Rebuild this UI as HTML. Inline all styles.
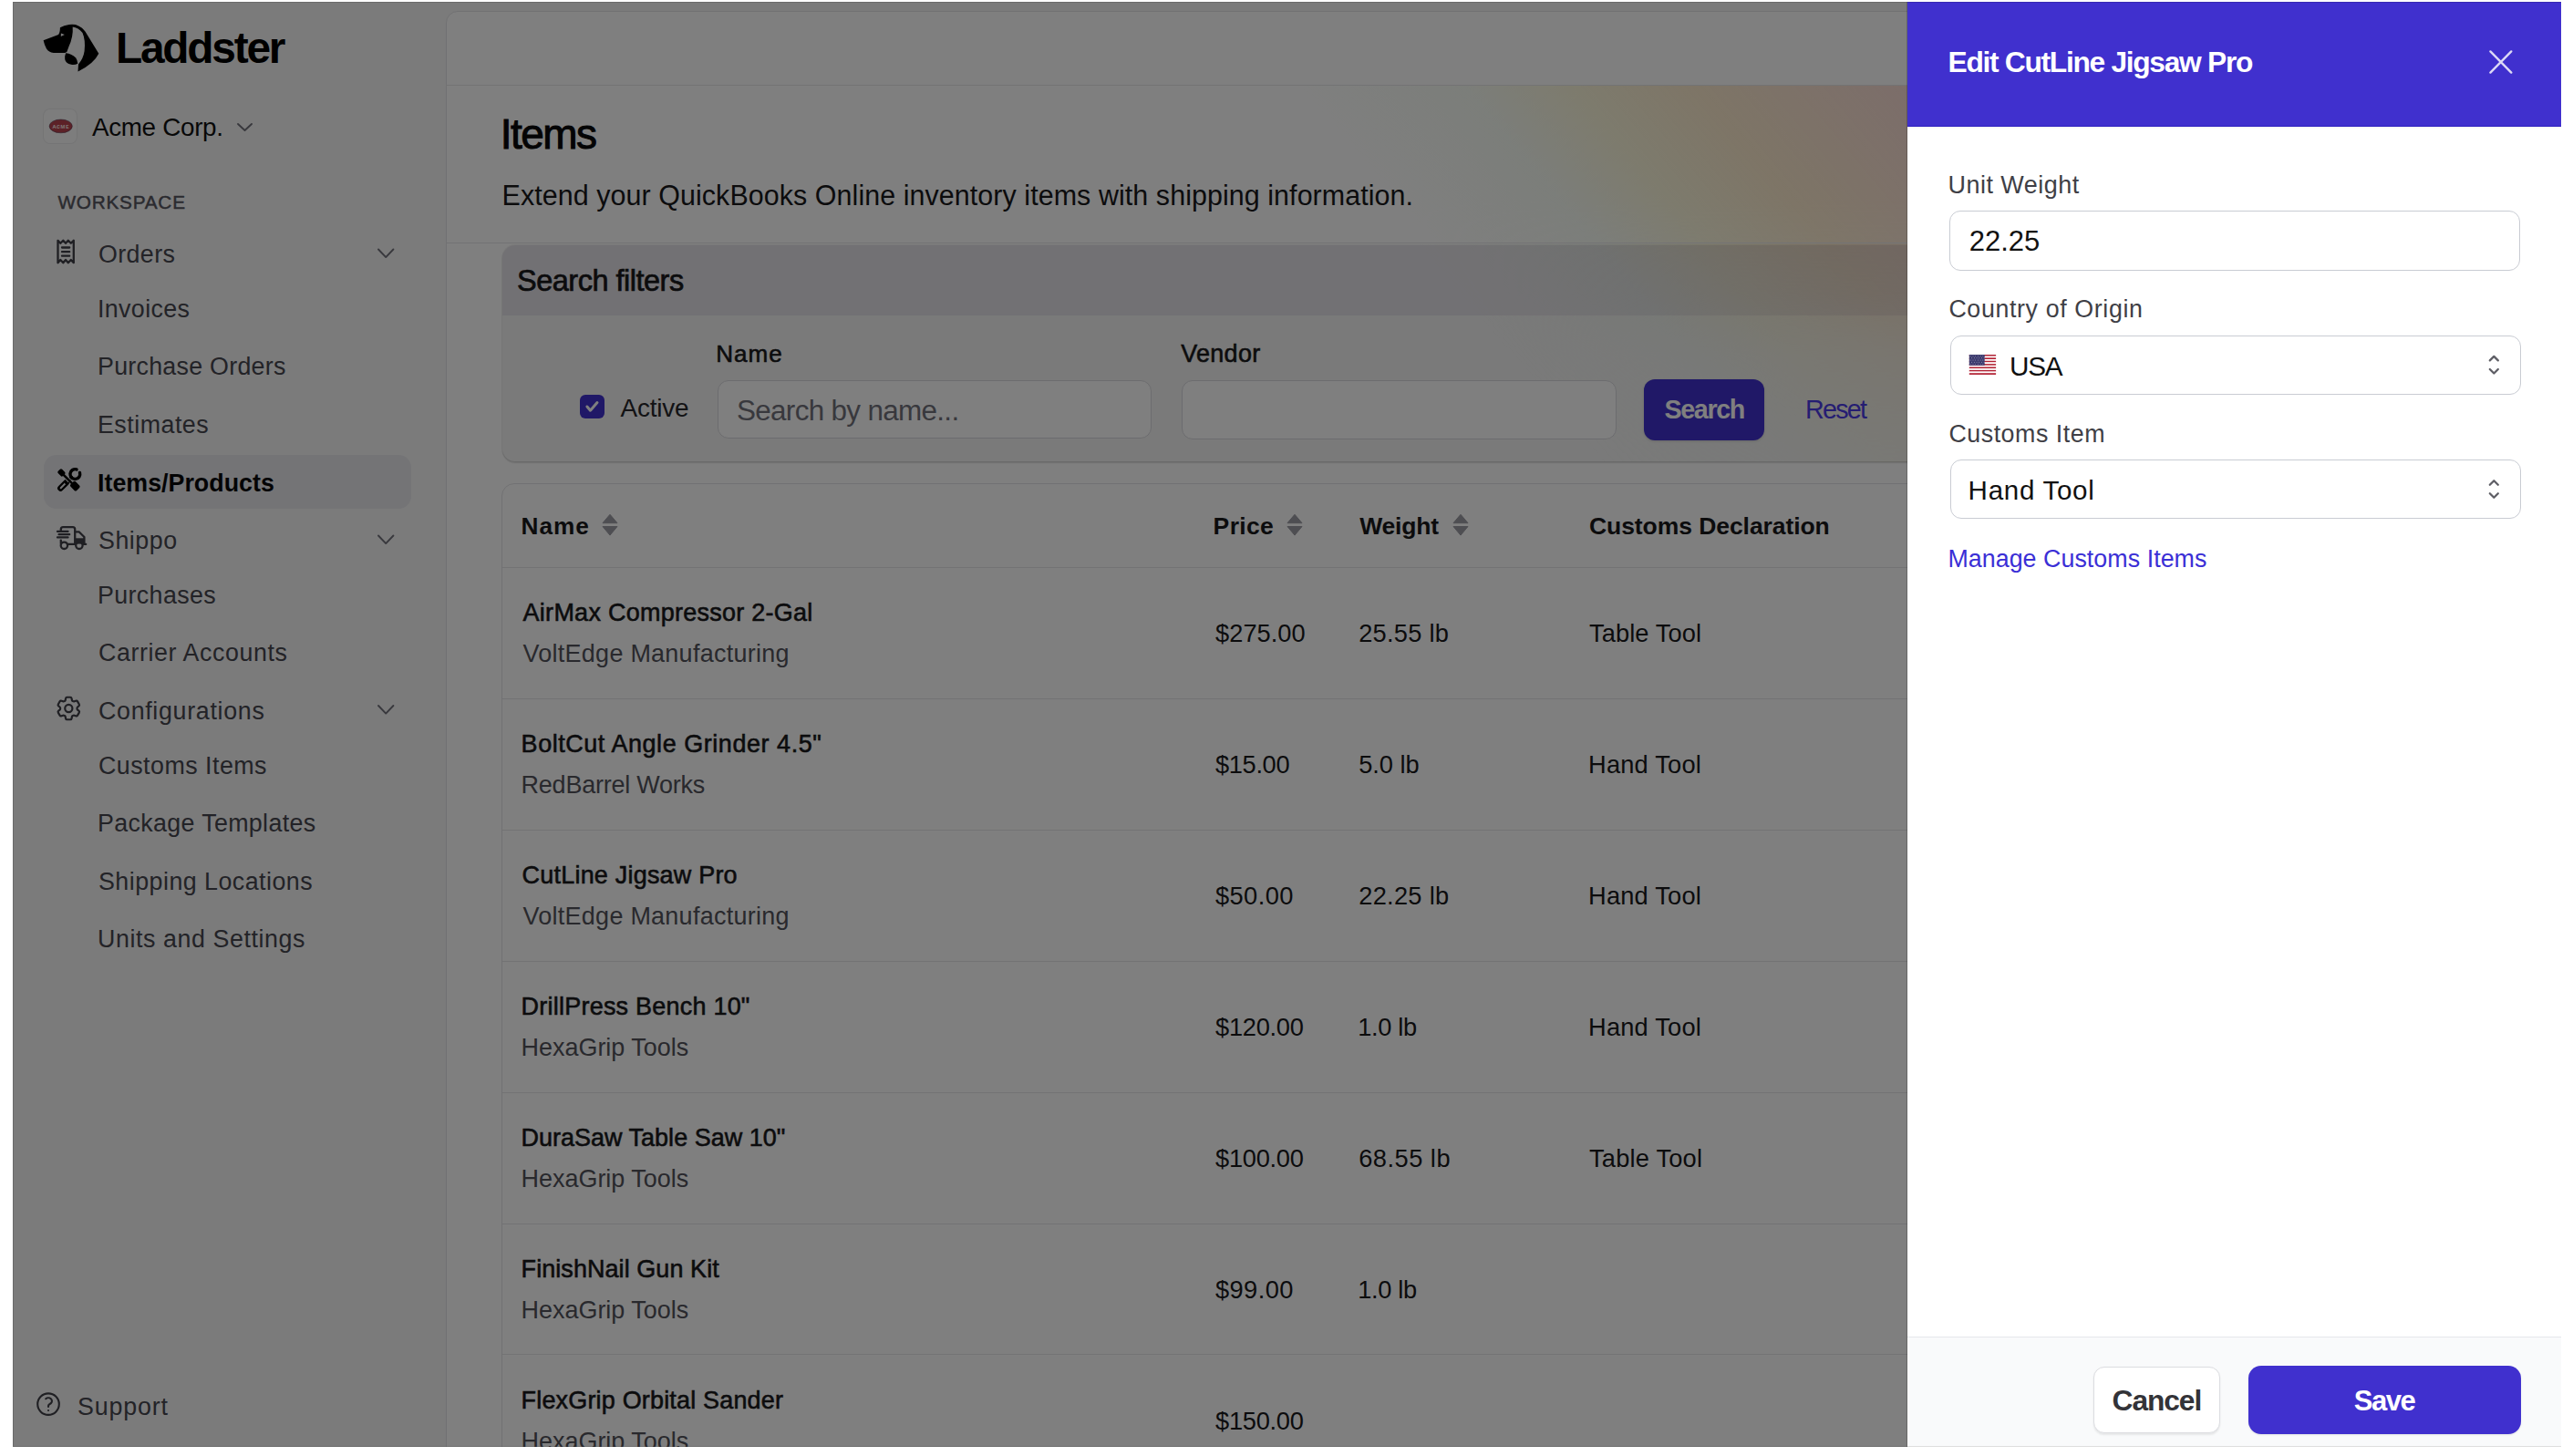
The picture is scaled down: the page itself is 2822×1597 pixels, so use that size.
<!DOCTYPE html>
<html><head><meta charset="utf-8"><title>Laddster - Items</title>
<style>
#clip{position:absolute;left:0;top:0;width:2809px;height:1587px;overflow:hidden}
html,body{margin:0;padding:0;background:#fff;width:2822px;height:1597px;overflow:hidden;position:relative;font-family:"Liberation Sans",sans-serif}
.t{position:absolute;white-space:pre}
</style></head><body><div id="root" style="position:absolute;left:0;top:0;width:2822px;height:1597px;overflow:hidden;background:#fff"><div id="clip">
<div style="position:absolute;left:14px;top:2px;width:2078px;height:1585px;background:#f6f6f7"></div>
<div style="position:absolute;left:489px;top:12px;width:2000px;height:1700px;background:#fff;border:1px solid #e3e3e6;border-radius:13px"></div>
<div style="position:absolute;left:490px;top:93px;width:1602px;height:1px;background:#e6e6e9"></div>
<div style="position:absolute;left:490px;top:94px;width:1602px;height:413px;background:linear-gradient(50deg, rgba(255,255,255,0) 65%, rgba(230,245,220,0.3) 75%, rgba(248,240,190,0.55) 81%, rgba(250,222,175,0.62) 88%, rgba(247,210,190,0.68) 96%, rgba(245,205,195,0.72) 100%);-webkit-mask-image:linear-gradient(to bottom, #000 0%, #000 30%, rgba(0,0,0,0.8) 55%, rgba(0,0,0,0.45) 72%, rgba(0,0,0,0.25) 100%)"></div>
<div style="position:absolute;left:490px;top:266px;width:1602px;height:1px;background:#e6e6e9"></div>
<div style="position:absolute;left:551px;top:269px;width:1700px;height:237px;border-radius:14px;background:rgba(0,0,0,0.045);box-shadow:0 2px 1.5px rgba(0,0,0,0.13), 0 0 0 1px rgba(0,0,0,0.05);overflow:hidden"><div style="position:absolute;left:0;top:0;right:0;height:77px;background:rgba(60,30,90,0.075)"></div></div>
<div style="position:absolute;left:787px;top:417px;width:476px;height:64px;box-sizing:border-box;border:1.5px solid #d9d9de;border-radius:12px;background:#fff"></div>
<div style="position:absolute;left:1295.5px;top:416.5px;width:477px;height:65px;box-sizing:border-box;border:1.5px solid #d9d9de;border-radius:12px;background:#fff"></div>
<div style="position:absolute;left:1803px;top:416px;width:132px;height:67px;border-radius:12px;background:#4030ce;box-shadow:0 1px 3px rgba(0,0,0,0.15)"></div>
<div style="position:absolute;left:636px;top:432.5px;width:26.5px;height:26.5px;border-radius:6px;background:#4030ce"></div>
<svg style="position:absolute;left:0;top:0" width="2822" height="1597"><polyline points="643.9,446 647.5,450.2 655,441.6" fill="none" stroke="#fff" stroke-width="3" stroke-linecap="round" stroke-linejoin="round"/></svg>
<div style="position:absolute;left:550px;top:530px;width:1700px;height:1200px;background:#fff;border:1px solid #e3e3e6;border-radius:14px"></div>
<div style="position:absolute;left:551px;top:622px;width:1541px;height:1px;background:#e6e6e9"></div>
<div style="position:absolute;left:551px;top:766px;width:1541px;height:1px;background:#e6e6e9"></div>
<div style="position:absolute;left:551px;top:910px;width:1541px;height:1px;background:#e6e6e9"></div>
<div style="position:absolute;left:551px;top:1054px;width:1541px;height:1px;background:#e6e6e9"></div>
<div style="position:absolute;left:551px;top:1198px;width:1541px;height:1px;background:#e6e6e9"></div>
<div style="position:absolute;left:551px;top:1342px;width:1541px;height:1px;background:#e6e6e9"></div>
<div style="position:absolute;left:551px;top:1485px;width:1541px;height:1px;background:#e6e6e9"></div>
<svg style="position:absolute;left:0;top:0" width="2822" height="1597"><path d="M661,573.7 L669,564.3 L677,573.7 Z M661,577.5 L677,577.5 L669,587.1 Z" fill="#9c9ca4" stroke="#9c9ca4" stroke-width="1" stroke-linejoin="round"/><path d="M1412,573.7 L1420,564.3 L1428,573.7 Z M1412,577.5 L1428,577.5 L1420,587.1 Z" fill="#9c9ca4" stroke="#9c9ca4" stroke-width="1" stroke-linejoin="round"/><path d="M1594,573.7 L1602,564.3 L1610,573.7 Z M1594,577.5 L1610,577.5 L1602,587.1 Z" fill="#9c9ca4" stroke="#9c9ca4" stroke-width="1" stroke-linejoin="round"/></svg>
<div style="position:absolute;left:48px;top:499px;width:403px;height:59px;border-radius:14px;background:#e8e8ec"></div>
<div style="position:absolute;left:48px;top:120px;width:36px;height:37px;border-radius:7px;background:#fbfbfb;box-shadow:0 0 0 1px rgba(0,0,0,0.05)"></div>
<svg style="position:absolute;left:0;top:0" width="2822" height="1597"><ellipse cx="66.7" cy="138.4" rx="12.6" ry="7.4" fill="#b8434f"/><ellipse cx="66.7" cy="138.4" rx="12.6" ry="7.4" fill="none" stroke="#3a3550" stroke-width="0.8" opacity="0.6"/><text x="66.7" y="141" text-anchor="middle" font-family="Liberation Sans" font-weight="bold" font-size="7" fill="#f3dede" letter-spacing="0.4">ᴀᴄᴍᴇ</text></svg>
<svg style="position:absolute;left:40px;top:20px" width="80" height="65" viewBox="0 0 80 65"><path d="M7.6 24.3 L24.1 17.9 Q25.9 15.5 25.9 10.2 Q30 8 35.7 7.0 Q39 6.6 42.9 7.0 Q47 8.5 50 10.7 Q52 12.5 53.6 14.7 L68.3 38.8 Q63 50 45.5 58.5 L46 50.4 Q51.5 44 52.6 36 Q54 24 50.5 16 Q46 10 39.7 9.4 Q40.5 20 35.5 31 L33.3 37.1 Q32 37.9 31.3 37.9 L18.75 37.9 Q13.4 37.5 11 33.5 Q8.6 29 7.6 24.3 Z" fill="#000"/><path d="M32.1 38.3 Q39 39 43.2 43.5 Q45 46 45.3 49.8 Q42 51.5 38 50.8 Q32 49.5 31.2 45 Q30.9 41.5 32.1 38.3 Z" fill="#000"/><path d="M26.9 16.6 L30.8 18.1 L26.8 20.1 Z" fill="#f6f6f7"/></svg>
<svg style="position:absolute;left:0;top:0" width="2822" height="1597"><polyline points="261,136 268.5,143 276,136" fill="none" stroke="#71717a" stroke-width="1.9" stroke-linecap="round" stroke-linejoin="round"/><polyline points="415,273.5 423.2,282.1 431.4,273.5" fill="none" stroke="#71717a" stroke-width="1.9" stroke-linecap="round" stroke-linejoin="round"/><polyline points="415,587.5 423.2,596.1 431.4,587.5" fill="none" stroke="#71717a" stroke-width="1.9" stroke-linecap="round" stroke-linejoin="round"/><polyline points="415,774 423.2,782.6 431.4,774" fill="none" stroke="#71717a" stroke-width="1.9" stroke-linecap="round" stroke-linejoin="round"/><g transform="translate(55,255)" fill="none" stroke="#3f3f46" stroke-width="2.3" stroke-linejoin="round" stroke-linecap="round"><path d="M8.5 33.2 V8.8 L11.3 11.8 L14.3 8.8 L17 11.8 L19.8 8.8 L22.8 11.8 L25.8 8.8 V33.2 L22.8 30 L19.8 33.2 L17 30 L14.3 33.2 L11.3 30 Z"/><path d="M13 16.5 H21.2 M13 21.2 H21.2 M13 25.7 H21.2"/></g><g transform="translate(55,505)" stroke-linecap="round"><line x1="11.4" y1="30.5" x2="17.6" y2="24.3" stroke="#000" stroke-width="6.6"/><line x1="11.7" y1="30.2" x2="16.6" y2="25.3" stroke="#e8e8ec" stroke-width="2"/><line x1="17.6" y1="24.3" x2="23.4" y2="18.5" stroke="#000" stroke-width="3.6"/><path d="M29 9.9 A5.4 5.4 0 1 0 32.5 13.4" fill="none" stroke="#000" stroke-width="3.4"/><line x1="17.5" y1="18.6" x2="21.5" y2="22.6" stroke="#e8e8ec" stroke-width="4.6" stroke-linecap="butt"/><rect x="-3.7" y="-3.1" width="7.4" height="6.2" rx="1.6" transform="translate(12.4,13.4) rotate(45)" fill="#000"/><line x1="14.5" y1="15.6" x2="23.5" y2="24.6" stroke="#000" stroke-width="2.7"/><rect x="-4.7" y="-3.9" width="9.4" height="7.8" rx="1.8" transform="translate(27.3,28.1) rotate(45)" fill="#000"/></g><g transform="translate(55,570)" fill="none" stroke="#3f3f46" stroke-width="2.3" stroke-linecap="round" stroke-linejoin="round"><path d="M11.8 12 V10.6 Q11.8 8.2 14.2 8.2 H24.8 Q27.2 8.2 27.2 10.6 V26.9 H19.5"/><path d="M11.8 22.6 V26"/><path d="M8 12.9 H19.5 M9.6 16.2 H21.2 M8 19.4 H19.5"/><path d="M27.2 13.3 H31.6 L37.4 19 V26.9 H36"/><path d="M37.4 26.9 H39.2"/><circle cx="15.4" cy="28.3" r="3.7"/><circle cx="31.9" cy="28.3" r="3.7"/></g><path d="M82.2 590.3 H92.4 V596.6 H82.2 Z" fill="#3f3f46"/><g transform="translate(59,760.7) scale(1.36)" fill="none" stroke="#3f3f46" stroke-width="1.6" stroke-linecap="round" stroke-linejoin="round"><path d="M9.594 3.94c.09-.542.56-.94 1.11-.94h2.593c.55 0 1.02.398 1.11.94l.213 1.281c.063.374.313.686.645.87.074.04.147.083.22.127.325.196.72.257 1.075.124l1.217-.456a1.125 1.125 0 0 1 1.37.49l1.296 2.247a1.125 1.125 0 0 1-.26 1.431l-1.003.827c-.293.241-.438.613-.43.992a7.723 7.723 0 0 1 0 .255c-.008.378.137.75.43.991l1.004.827c.424.35.534.955.26 1.43l-1.298 2.247a1.125 1.125 0 0 1-1.369.491l-1.217-.456c-.355-.133-.75-.072-1.076.124a6.47 6.47 0 0 1-.22.128c-.331.183-.581.495-.644.869l-.213 1.281c-.09.543-.56.94-1.11.94h-2.594c-.55 0-1.019-.398-1.11-.94l-.213-1.281c-.062-.374-.312-.686-.644-.87a6.52 6.52 0 0 1-.22-.127c-.325-.196-.72-.257-1.076-.124l-1.217.456a1.125 1.125 0 0 1-1.369-.49l-1.297-2.247a1.125 1.125 0 0 1 .26-1.431l1.004-.827c.292-.24.437-.613.43-.991a6.932 6.932 0 0 1 0-.255c.007-.38-.138-.751-.43-.992l-1.004-.827a1.125 1.125 0 0 1-.26-1.43l1.297-2.247a1.125 1.125 0 0 1 1.37-.491l1.216.456c.356.133.751.072 1.076-.124.072-.044.146-.086.22-.128.332-.183.582-.495.644-.869l.214-1.28Z"/><path d="M15 12a3 3 0 1 1-6 0 3 3 0 0 1 6 0Z"/></g><g transform="translate(37.3,1524.4) scale(1.31)" fill="none" stroke="#3f3f46" stroke-width="1.6" stroke-linecap="round" stroke-linejoin="round"><path d="M9.879 7.519c1.171-1.025 3.071-1.025 4.242 0 1.172 1.025 1.172 2.687 0 3.712-.203.179-.43.326-.67.442-.745.361-1.45.999-1.45 1.827v.75M21 12a9 9 0 1 1-18 0 9 9 0 0 1 18 0Zm-9 5.25h.008v.008H12v-.008Z"/></g></svg>
<div class="t" style="left:127.0px;top:29.0px;color:#000;font:bold 47.83px/1 'Liberation Sans', sans-serif;letter-spacing:-2.229px;">Laddster</div>
<div class="t" style="left:100.9px;top:125.7px;color:#111;font:normal 27.83px/1 'Liberation Sans', sans-serif;letter-spacing:-0.311px;">Acme Corp.</div>
<div class="t" style="left:63.4px;top:211.9px;color:#55555e;font:normal 20.72px/1 'Liberation Sans', sans-serif;letter-spacing:0.800px;-webkit-text-stroke:0.46px currentColor;">WORKSPACE</div>
<div class="t" style="left:108.0px;top:266.3px;color:#46464f;font:normal 26.81px/1 'Liberation Sans', sans-serif;letter-spacing:0.400px;">Orders</div>
<div class="t" style="left:107.0px;top:325.7px;color:#46464f;font:normal 26.81px/1 'Liberation Sans', sans-serif;letter-spacing:0.371px;">Invoices</div>
<div class="t" style="left:107.0px;top:389.0px;color:#46464f;font:normal 26.81px/1 'Liberation Sans', sans-serif;letter-spacing:0.271px;">Purchase Orders</div>
<div class="t" style="left:107.0px;top:452.6px;color:#46464f;font:normal 26.81px/1 'Liberation Sans', sans-serif;letter-spacing:0.500px;">Estimates</div>
<div class="t" style="left:108.0px;top:580.0px;color:#46464f;font:normal 26.81px/1 'Liberation Sans', sans-serif;letter-spacing:0.520px;">Shippo</div>
<div class="t" style="left:107.0px;top:639.5px;color:#46464f;font:normal 26.81px/1 'Liberation Sans', sans-serif;letter-spacing:0.375px;">Purchases</div>
<div class="t" style="left:108.0px;top:703.2px;color:#46464f;font:normal 26.81px/1 'Liberation Sans', sans-serif;letter-spacing:0.587px;">Carrier Accounts</div>
<div class="t" style="left:108.0px;top:766.5px;color:#46464f;font:normal 26.81px/1 'Liberation Sans', sans-serif;letter-spacing:0.692px;">Configurations</div>
<div class="t" style="left:108.0px;top:826.9px;color:#46464f;font:normal 26.81px/1 'Liberation Sans', sans-serif;letter-spacing:0.483px;">Customs Items</div>
<div class="t" style="left:107.0px;top:890.0px;color:#46464f;font:normal 26.81px/1 'Liberation Sans', sans-serif;letter-spacing:0.362px;">Package Templates</div>
<div class="t" style="left:108.0px;top:953.7px;color:#46464f;font:normal 26.81px/1 'Liberation Sans', sans-serif;letter-spacing:0.482px;">Shipping Locations</div>
<div class="t" style="left:107.0px;top:1017.3px;color:#46464f;font:normal 26.81px/1 'Liberation Sans', sans-serif;letter-spacing:0.588px;">Units and Settings</div>
<div class="t" style="left:107.0px;top:516.7px;color:#09090b;font:bold 26.81px/1 'Liberation Sans', sans-serif;letter-spacing:0.015px;">Items/Products</div>
<div class="t" style="left:85.0px;top:1530.4px;color:#46464f;font:normal 26.81px/1 'Liberation Sans', sans-serif;letter-spacing:0.867px;">Support</div>
<div class="t" style="left:548.8px;top:124.7px;color:#09090b;font:normal 45.94px/1 'Liberation Sans', sans-serif;letter-spacing:-1.550px;-webkit-text-stroke:1.01px currentColor;">Items</div>
<div class="t" style="left:550.6px;top:199.1px;color:#18181b;font:normal 30.43px/1 'Liberation Sans', sans-serif;letter-spacing:0.073px;">Extend your QuickBooks Online inventory items with shipping information.</div>
<div class="t" style="left:567.0px;top:292.0px;color:#18181b;font:normal 32.46px/1 'Liberation Sans', sans-serif;letter-spacing:-0.477px;-webkit-text-stroke:0.71px currentColor;">Search filters</div>
<div class="t" style="left:785.2px;top:375.0px;color:#18181b;font:normal 26.09px/1 'Liberation Sans', sans-serif;letter-spacing:1.000px;-webkit-text-stroke:0.57px currentColor;">Name</div>
<div class="t" style="left:1295.3px;top:375.2px;color:#18181b;font:normal 26.96px/1 'Liberation Sans', sans-serif;letter-spacing:0.280px;-webkit-text-stroke:0.59px currentColor;">Vendor</div>
<div class="t" style="left:680.5px;top:433.8px;color:#27272a;font:normal 27.97px/1 'Liberation Sans', sans-serif;letter-spacing:-0.200px;">Active</div>
<div class="t" style="left:808.0px;top:435.4px;color:#71717a;font:normal 31.45px/1 'Liberation Sans', sans-serif;letter-spacing:-0.688px;">Search by name...</div>
<div class="t" style="left:1825.5px;top:435.4px;color:#ffffff;font:bold 28.70px/1 'Liberation Sans', sans-serif;letter-spacing:-1.360px;">Search</div>
<div class="t" style="left:1980.0px;top:435.4px;color:#4a3ae4;font:normal 28.70px/1 'Liberation Sans', sans-serif;letter-spacing:-1.750px;">Reset</div>
<div class="t" style="left:571.6px;top:563.6px;color:#18181b;font:bold 26.23px/1 'Liberation Sans', sans-serif;letter-spacing:0.933px;">Name</div>
<div class="t" style="left:1330.6px;top:563.8px;color:#18181b;font:bold 26.52px/1 'Liberation Sans', sans-serif;letter-spacing:0.350px;">Price</div>
<div class="t" style="left:1491.2px;top:563.8px;color:#18181b;font:bold 26.52px/1 'Liberation Sans', sans-serif;letter-spacing:-0.200px;">Weight</div>
<div class="t" style="left:1743.0px;top:563.8px;color:#18181b;font:bold 26.52px/1 'Liberation Sans', sans-serif;letter-spacing:-0.078px;">Customs Declaration</div>
<div class="t" style="left:573.6px;top:659.0px;color:#18181b;font:normal 26.96px/1 'Liberation Sans', sans-serif;letter-spacing:0.282px;-webkit-text-stroke:0.59px currentColor;">AirMax Compressor 2-Gal</div>
<div class="t" style="left:573.6px;top:704.0px;color:#52525b;font:normal 26.96px/1 'Liberation Sans', sans-serif;letter-spacing:0.267px;">VoltEdge Manufacturing</div>
<div class="t" style="left:1333.0px;top:680.5px;color:#18181b;font:normal 27.25px/1 'Liberation Sans', sans-serif;letter-spacing:0.033px;">$275.00</div>
<div class="t" style="left:1490.2px;top:680.5px;color:#18181b;font:normal 27.25px/1 'Liberation Sans', sans-serif;letter-spacing:0.257px;">25.55 lb</div>
<div class="t" style="left:1743.0px;top:680.5px;color:#18181b;font:normal 27.25px/1 'Liberation Sans', sans-serif;letter-spacing:0.089px;">Table Tool</div>
<div class="t" style="left:571.6px;top:803.0px;color:#18181b;font:normal 26.96px/1 'Liberation Sans', sans-serif;letter-spacing:0.560px;-webkit-text-stroke:0.59px currentColor;">BoltCut Angle Grinder 4.5"</div>
<div class="t" style="left:571.6px;top:848.0px;color:#52525b;font:normal 26.96px/1 'Liberation Sans', sans-serif;letter-spacing:-0.214px;">RedBarrel Works</div>
<div class="t" style="left:1333.0px;top:824.5px;color:#18181b;font:normal 27.25px/1 'Liberation Sans', sans-serif;letter-spacing:-0.360px;">$15.00</div>
<div class="t" style="left:1490.2px;top:824.5px;color:#18181b;font:normal 27.25px/1 'Liberation Sans', sans-serif;letter-spacing:-0.040px;">5.0 lb</div>
<div class="t" style="left:1742.0px;top:824.5px;color:#18181b;font:normal 27.25px/1 'Liberation Sans', sans-serif;letter-spacing:0.200px;">Hand Tool</div>
<div class="t" style="left:572.6px;top:947.0px;color:#18181b;font:normal 26.96px/1 'Liberation Sans', sans-serif;letter-spacing:0.224px;-webkit-text-stroke:0.59px currentColor;">CutLine Jigsaw Pro</div>
<div class="t" style="left:573.6px;top:992.0px;color:#52525b;font:normal 26.96px/1 'Liberation Sans', sans-serif;letter-spacing:0.267px;">VoltEdge Manufacturing</div>
<div class="t" style="left:1333.0px;top:968.5px;color:#18181b;font:normal 27.25px/1 'Liberation Sans', sans-serif;letter-spacing:0.400px;">$50.00</div>
<div class="t" style="left:1490.2px;top:968.5px;color:#18181b;font:normal 27.25px/1 'Liberation Sans', sans-serif;letter-spacing:0.286px;">22.25 lb</div>
<div class="t" style="left:1742.0px;top:968.5px;color:#18181b;font:normal 27.25px/1 'Liberation Sans', sans-serif;letter-spacing:0.200px;">Hand Tool</div>
<div class="t" style="left:571.6px;top:1091.0px;color:#18181b;font:normal 26.96px/1 'Liberation Sans', sans-serif;letter-spacing:0.242px;-webkit-text-stroke:0.59px currentColor;">DrillPress Bench 10"</div>
<div class="t" style="left:571.6px;top:1136.0px;color:#52525b;font:normal 26.96px/1 'Liberation Sans', sans-serif;letter-spacing:-0.015px;">HexaGrip Tools</div>
<div class="t" style="left:1333.0px;top:1112.5px;color:#18181b;font:normal 27.25px/1 'Liberation Sans', sans-serif;letter-spacing:-0.267px;">$120.00</div>
<div class="t" style="left:1489.2px;top:1112.5px;color:#18181b;font:normal 27.25px/1 'Liberation Sans', sans-serif;letter-spacing:-0.360px;">1.0 lb</div>
<div class="t" style="left:1742.0px;top:1112.5px;color:#18181b;font:normal 27.25px/1 'Liberation Sans', sans-serif;letter-spacing:0.200px;">Hand Tool</div>
<div class="t" style="left:571.6px;top:1235.0px;color:#18181b;font:normal 26.96px/1 'Liberation Sans', sans-serif;letter-spacing:0.020px;-webkit-text-stroke:0.59px currentColor;">DuraSaw Table Saw 10"</div>
<div class="t" style="left:571.6px;top:1280.0px;color:#52525b;font:normal 26.96px/1 'Liberation Sans', sans-serif;letter-spacing:-0.015px;">HexaGrip Tools</div>
<div class="t" style="left:1333.0px;top:1256.5px;color:#18181b;font:normal 27.25px/1 'Liberation Sans', sans-serif;letter-spacing:-0.267px;">$100.00</div>
<div class="t" style="left:1490.2px;top:1256.5px;color:#18181b;font:normal 27.25px/1 'Liberation Sans', sans-serif;letter-spacing:0.486px;">68.55 lb</div>
<div class="t" style="left:1743.0px;top:1256.5px;color:#18181b;font:normal 27.25px/1 'Liberation Sans', sans-serif;letter-spacing:0.200px;">Table Tool</div>
<div class="t" style="left:571.6px;top:1379.0px;color:#18181b;font:normal 26.96px/1 'Liberation Sans', sans-serif;letter-spacing:0.082px;-webkit-text-stroke:0.59px currentColor;">FinishNail Gun Kit</div>
<div class="t" style="left:571.6px;top:1424.0px;color:#52525b;font:normal 26.96px/1 'Liberation Sans', sans-serif;letter-spacing:-0.015px;">HexaGrip Tools</div>
<div class="t" style="left:1333.0px;top:1400.5px;color:#18181b;font:normal 27.25px/1 'Liberation Sans', sans-serif;letter-spacing:0.400px;">$99.00</div>
<div class="t" style="left:1489.2px;top:1400.5px;color:#18181b;font:normal 27.25px/1 'Liberation Sans', sans-serif;letter-spacing:-0.360px;">1.0 lb</div>
<div class="t" style="left:571.6px;top:1523.0px;color:#18181b;font:normal 26.96px/1 'Liberation Sans', sans-serif;letter-spacing:0.191px;-webkit-text-stroke:0.59px currentColor;">FlexGrip Orbital Sander</div>
<div class="t" style="left:571.6px;top:1568.0px;color:#52525b;font:normal 26.96px/1 'Liberation Sans', sans-serif;letter-spacing:-0.015px;">HexaGrip Tools</div>
<div class="t" style="left:1333.0px;top:1544.5px;color:#18181b;font:normal 27.25px/1 'Liberation Sans', sans-serif;letter-spacing:-0.267px;">$150.00</div>
<div style="position:absolute;left:14px;top:2px;width:2078px;height:1585px;background:rgba(0,0,0,0.5)"></div>
<div style="position:absolute;left:2091px;top:2px;width:1px;height:1585px;background:rgba(0,0,0,0.18)"></div>
<div style="position:absolute;left:2092px;top:2px;width:717px;height:1585px;background:#fff"></div>
<div style="position:absolute;left:2092px;top:2px;width:717px;height:135.5px;background:#4030ce;border-bottom:1px solid #2e1fc0;box-shadow:0 1px 2px rgba(0,0,0,0.06)"></div>
<svg style="position:absolute;left:0;top:0" width="2822" height="1597"><path d="M2731.4 56.4 L2754.3 79.6 M2754.3 56.4 L2731.4 79.6" stroke="#dcd9f6" stroke-width="2.4" stroke-linecap="round"/></svg>
<div style="position:absolute;left:2138px;top:231px;width:626px;height:65.5px;box-sizing:border-box;border:1.5px solid #c9ccd3;border-radius:12px;background:#fff"></div>
<div style="position:absolute;left:2138.5px;top:368px;width:626px;height:65px;box-sizing:border-box;border:1.5px solid #c9ccd3;border-radius:12px;background:#fff"></div>
<div style="position:absolute;left:2138.5px;top:504px;width:626px;height:65px;box-sizing:border-box;border:1.5px solid #c9ccd3;border-radius:12px;background:#fff"></div>
<svg style="position:absolute;left:0;top:0" width="2822" height="1597"><polyline points="2730.8,395.4 2735.3,390.9 2739.8,395.4" fill="none" stroke="#5f5f66" stroke-width="2.3" stroke-linecap="round" stroke-linejoin="round"/><polyline points="2730.8,405 2735.3,409.5 2739.8,405" fill="none" stroke="#5f5f66" stroke-width="2.3" stroke-linecap="round" stroke-linejoin="round"/><polyline points="2730.8,531.7 2735.3,527.2 2739.8,531.7" fill="none" stroke="#5f5f66" stroke-width="2.3" stroke-linecap="round" stroke-linejoin="round"/><polyline points="2730.8,541.3 2735.3,545.8 2739.8,541.3" fill="none" stroke="#5f5f66" stroke-width="2.3" stroke-linecap="round" stroke-linejoin="round"/><rect x="2159.8" y="389.00" width="29.3" height="1.73" fill="#b22234"/><rect x="2159.8" y="390.68" width="29.3" height="1.73" fill="#ffffff"/><rect x="2159.8" y="392.37" width="29.3" height="1.73" fill="#b22234"/><rect x="2159.8" y="394.05" width="29.3" height="1.73" fill="#ffffff"/><rect x="2159.8" y="395.74" width="29.3" height="1.73" fill="#b22234"/><rect x="2159.8" y="397.42" width="29.3" height="1.73" fill="#ffffff"/><rect x="2159.8" y="399.11" width="29.3" height="1.73" fill="#b22234"/><rect x="2159.8" y="400.79" width="29.3" height="1.73" fill="#ffffff"/><rect x="2159.8" y="402.48" width="29.3" height="1.73" fill="#b22234"/><rect x="2159.8" y="404.16" width="29.3" height="1.73" fill="#ffffff"/><rect x="2159.8" y="405.85" width="29.3" height="1.73" fill="#b22234"/><rect x="2159.8" y="407.53" width="29.3" height="1.73" fill="#ffffff"/><rect x="2159.8" y="409.22" width="29.3" height="1.73" fill="#b22234"/><rect x="2159.8" y="389" width="16.9" height="11.79" fill="#3c3b6e"/><circle cx="2161.30" cy="390.40" r="0.45" fill="#c8c8e0"/><circle cx="2164.00" cy="390.40" r="0.45" fill="#c8c8e0"/><circle cx="2166.70" cy="390.40" r="0.45" fill="#c8c8e0"/><circle cx="2169.40" cy="390.40" r="0.45" fill="#c8c8e0"/><circle cx="2172.10" cy="390.40" r="0.45" fill="#c8c8e0"/><circle cx="2174.80" cy="390.40" r="0.45" fill="#c8c8e0"/><circle cx="2162.65" cy="392.70" r="0.45" fill="#c8c8e0"/><circle cx="2165.35" cy="392.70" r="0.45" fill="#c8c8e0"/><circle cx="2168.05" cy="392.70" r="0.45" fill="#c8c8e0"/><circle cx="2170.75" cy="392.70" r="0.45" fill="#c8c8e0"/><circle cx="2173.45" cy="392.70" r="0.45" fill="#c8c8e0"/><circle cx="2176.15" cy="392.70" r="0.45" fill="#c8c8e0"/><circle cx="2161.30" cy="395.00" r="0.45" fill="#c8c8e0"/><circle cx="2164.00" cy="395.00" r="0.45" fill="#c8c8e0"/><circle cx="2166.70" cy="395.00" r="0.45" fill="#c8c8e0"/><circle cx="2169.40" cy="395.00" r="0.45" fill="#c8c8e0"/><circle cx="2172.10" cy="395.00" r="0.45" fill="#c8c8e0"/><circle cx="2174.80" cy="395.00" r="0.45" fill="#c8c8e0"/><circle cx="2162.65" cy="397.30" r="0.45" fill="#c8c8e0"/><circle cx="2165.35" cy="397.30" r="0.45" fill="#c8c8e0"/><circle cx="2168.05" cy="397.30" r="0.45" fill="#c8c8e0"/><circle cx="2170.75" cy="397.30" r="0.45" fill="#c8c8e0"/><circle cx="2173.45" cy="397.30" r="0.45" fill="#c8c8e0"/><circle cx="2176.15" cy="397.30" r="0.45" fill="#c8c8e0"/><circle cx="2161.30" cy="399.60" r="0.45" fill="#c8c8e0"/><circle cx="2164.00" cy="399.60" r="0.45" fill="#c8c8e0"/><circle cx="2166.70" cy="399.60" r="0.45" fill="#c8c8e0"/><circle cx="2169.40" cy="399.60" r="0.45" fill="#c8c8e0"/><circle cx="2172.10" cy="399.60" r="0.45" fill="#c8c8e0"/><circle cx="2174.80" cy="399.60" r="0.45" fill="#c8c8e0"/></svg>
<div style="position:absolute;left:2092px;top:1466px;width:717px;height:1px;background:#e5e7eb"></div>
<div style="position:absolute;left:2094px;top:1467px;width:715px;height:119px;background:#f9fafb"></div>
<div style="position:absolute;left:2296px;top:1498.5px;width:139px;height:73px;box-sizing:border-box;border:1px solid #dcdde1;border-radius:12px;background:#fff;box-shadow:0 1.5px 2px rgba(0,0,0,0.08)"></div>
<div style="position:absolute;left:2466px;top:1498px;width:299px;height:74.5px;border-radius:14px;background:#4030ce;box-shadow:0 1px 2px rgba(0,0,0,0.1)"></div>
<div class="t" style="left:2136.5px;top:52.7px;color:#ffffff;font:bold 31.74px/1 'Liberation Sans', sans-serif;letter-spacing:-1.291px;">Edit CutLine Jigsaw Pro</div>
<div class="t" style="left:2136.5px;top:190.0px;color:#3f3f46;font:normal 26.96px/1 'Liberation Sans', sans-serif;letter-spacing:0.480px;">Unit Weight</div>
<div class="t" style="left:2159.7px;top:249.4px;color:#111;font:normal 31.01px/1 'Liberation Sans', sans-serif;letter-spacing:0.000px;">22.25</div>
<div class="t" style="left:2137.4px;top:326.4px;color:#3f3f46;font:normal 26.81px/1 'Liberation Sans', sans-serif;letter-spacing:0.625px;">Country of Origin</div>
<div class="t" style="left:2204.0px;top:386.5px;color:#111;font:normal 29.71px/1 'Liberation Sans', sans-serif;letter-spacing:-1.300px;">USA</div>
<div class="t" style="left:2137.4px;top:463.0px;color:#3f3f46;font:normal 26.81px/1 'Liberation Sans', sans-serif;letter-spacing:0.527px;">Customs Item</div>
<div class="t" style="left:2158.6px;top:523.0px;color:#111;font:normal 29.57px/1 'Liberation Sans', sans-serif;letter-spacing:0.700px;">Hand Tool</div>
<div class="t" style="left:2136.4px;top:599.5px;color:#3b2fd6;font:normal 26.81px/1 'Liberation Sans', sans-serif;letter-spacing:0.053px;">Manage Customs Items</div>
<div class="t" style="left:2316.6px;top:1520.7px;color:#333338;font:bold 31.74px/1 'Liberation Sans', sans-serif;letter-spacing:-1.080px;">Cancel</div>
<div class="t" style="left:2581.7px;top:1520.7px;color:#ffffff;font:bold 31.01px/1 'Liberation Sans', sans-serif;letter-spacing:-1.467px;">Save</div>
<div style="position:absolute;left:14px;top:2px;width:2795px;height:1585px;box-sizing:border-box;border:1px solid rgba(0,0,0,0.13);border-right:none"></div>
</div></div>
<script>(function(){var w=window.innerWidth;if(w&&Math.abs(w-2822)>60){var r=document.getElementById('root');r.style.transformOrigin='0 0';r.style.transform='scale('+(w/2822)+')';}})();</script>
</body></html>
